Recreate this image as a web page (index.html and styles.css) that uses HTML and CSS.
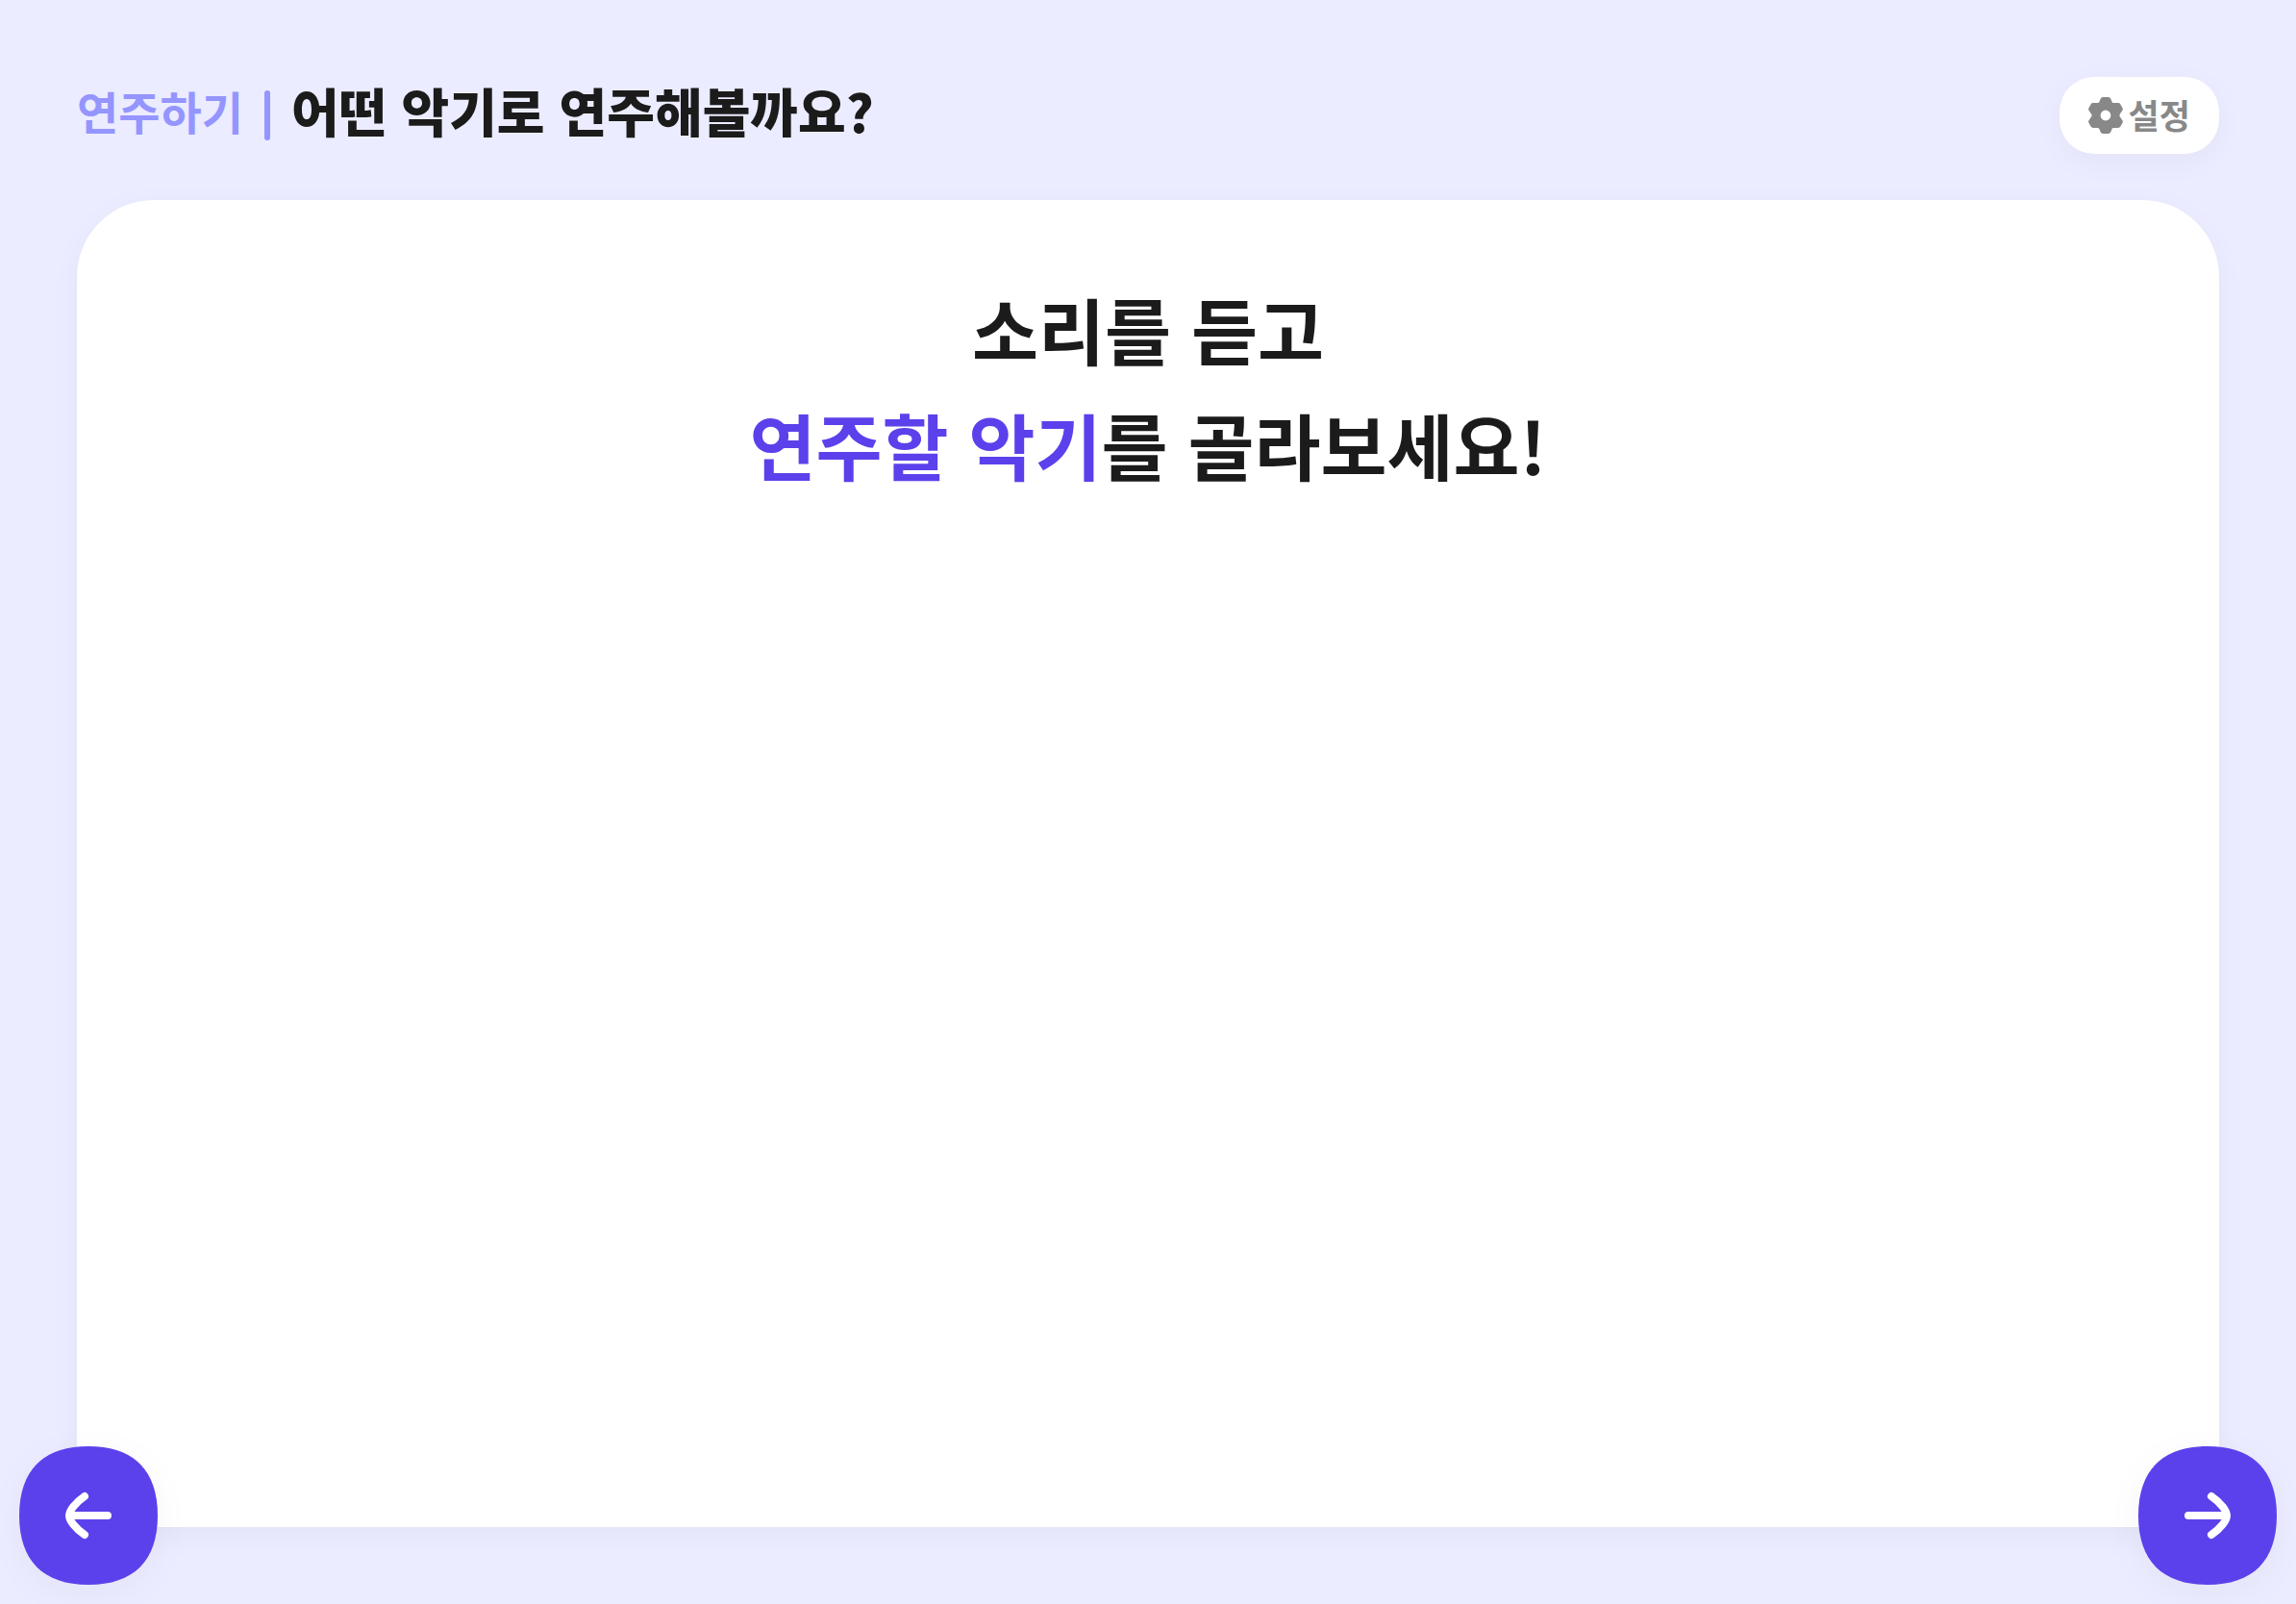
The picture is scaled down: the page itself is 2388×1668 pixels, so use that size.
FILE: index.html
```
<!DOCTYPE html>
<html lang="ko">
<head>
    <meta charset="UTF-8">
    <meta name="viewport" content="width=device-width, initial-scale=1.0">
    <title>연주하기</title>
    <link rel="stylesheet" href="styles.css">
</head>
<body>
    <!-- Header -->
    <header class="header">
        <div class="header-title">
            <span class="section-name">연주하기</span>
            <span class="divider"></span>
            <h1>어떤 악기로 연주해볼까요?</h1>
        </div>
        <button type="button" class="settings-button">
            <svg class="gear" viewBox="0 0 36 38" aria-hidden="true">
                <path fill-rule="evenodd" d="M15.2 0H20.8Q22.6 0 23.3 1.7L24.8 5.2Q25.2 6.2 26.3 6.1L31 6.1Q32.6 6.1 33.4 7.4L35.5 11.2Q36.3 12.7 35.3 14L33.1 17.2Q31.8 19 33.1 20.8L35.3 24Q36.3 25.3 35.5 26.8L33.4 30.6Q32.6 31.9 31 31.9L26.3 31.9Q25.2 31.8 24.8 32.8L23.3 36.3Q22.6 38 20.8 38H15.2Q13.4 38 12.7 36.3L11.2 32.8Q10.8 31.8 9.7 31.9L5 31.9Q3.4 31.9 2.6 30.6L0.5 26.8Q-0.3 25.3 0.7 24L2.9 20.8Q4.2 19 2.9 17.2L0.7 14Q-0.3 12.7 0.5 11.2L2.6 7.4Q3.4 6.1 5 6.1L9.7 6.1Q10.8 6.2 11.2 5.2L12.7 1.7Q13.4 0 15.2 0ZM18 13.6A5.4 5.4 0 1 0 18 24.4A5.4 5.4 0 1 0 18 13.6Z"/>
            </svg>
            <span class="settings-label">설정</span>
        </button>
    </header>

    <!-- Main Content -->
    <main class="card">
        <p class="guide">소리를 듣고<br><strong>연주할 악기</strong>를 골라보세요!</p>
    </main>

    <!-- Page Navigation -->
    <button type="button" class="nav-button prev" aria-label="이전">
        <svg viewBox="0 0 144 144" aria-hidden="true">
            <path class="nav-shape" d="M0 72C0 25 25 0 72 0S144 25 144 72 119 144 72 144 0 119 0 72Z"/>
            <path class="nav-arrow" d="M92 72H53M68 52C58 59 52 67 52 72S58 85 68 92"/>
        </svg>
    </button>
    <button type="button" class="nav-button next" aria-label="다음">
        <svg viewBox="0 0 144 144" aria-hidden="true">
            <path class="nav-shape" d="M0 72C0 25 25 0 72 0S144 25 144 72 119 144 72 144 0 119 0 72Z"/>
            <path class="nav-arrow" d="M52 72H91M76 52C86 59 92 67 92 72S86 85 76 92"/>
        </svg>
    </button>
</body>
</html>
```
FILE: styles.css
```
* {
    box-sizing: border-box;
}

body {
    position: relative;
    display: flex;
    flex-direction: column;
    gap: 48px;
    min-height: 100vh;
    margin: 0;
    padding: 80px;
    background: #ebecff;
    color: #1b1b1b;
    font-family: "Noto Sans CJK KR", sans-serif;
}

button {
    border: none;
    font-family: inherit;
    cursor: pointer;
}

/* Header */
.header {
    display: flex;
    justify-content: space-between;
    align-items: center;
    height: 80px;
}

.header-title {
    display: flex;
    align-items: center;
}

.section-name {
    padding-bottom: 10px;
    color: #9595ff;
    font-size: 47px;
    font-weight: 700;
    line-height: 70px;
}

.divider {
    width: 6px;
    height: 52px;
    margin: 0 22px;
    border-radius: 3px;
    background: #9595ff;
}

h1 {
    margin: 0;
    padding-bottom: 10px;
    font-size: 54px;
    font-weight: 900;
    line-height: 70px;
}

.settings-button {
    display: flex;
    align-items: center;
    gap: 6px;
    height: 80px;
    padding: 0 30px;
    border-radius: 36px;
    background: white;
    box-shadow: 0 8px 32px rgba(27, 27, 27, 0.04);
    color: #888;
    font-size: 35px;
    font-weight: 700;
}

.settings-label {
    padding-bottom: 4px;
}

.gear {
    width: 36px;
    height: 38px;
    fill: #888;
}

/* Card */
.card {
    flex: 1;
    padding: 74px 80px;
    border-radius: 80px;
    background: white;
    box-shadow: 0 8px 32px rgba(27, 27, 27, 0.04);
}

.guide {
    margin: 0;
    font-size: 75px;
    font-weight: 700;
    line-height: 120px;
    text-align: center;
}

.guide strong {
    color: #5b41eb;
    font-weight: inherit;
}

/* Round buttons over the card corners */
.nav-button {
    position: absolute;
    bottom: 20px;
    width: 144px;
    height: 144px;
    padding: 0;
    background: none;
    filter: drop-shadow(0 8px 16px rgba(27, 27, 27, 0.04));
}

.nav-button svg {
    display: block;
}

.prev {
    left: 20px;
}

.next {
    right: 20px;
}

.nav-shape {
    fill: #5b41eb;
}

.nav-arrow {
    fill: none;
    stroke: white;
    stroke-width: 8px;
    stroke-linecap: round;
}
```
